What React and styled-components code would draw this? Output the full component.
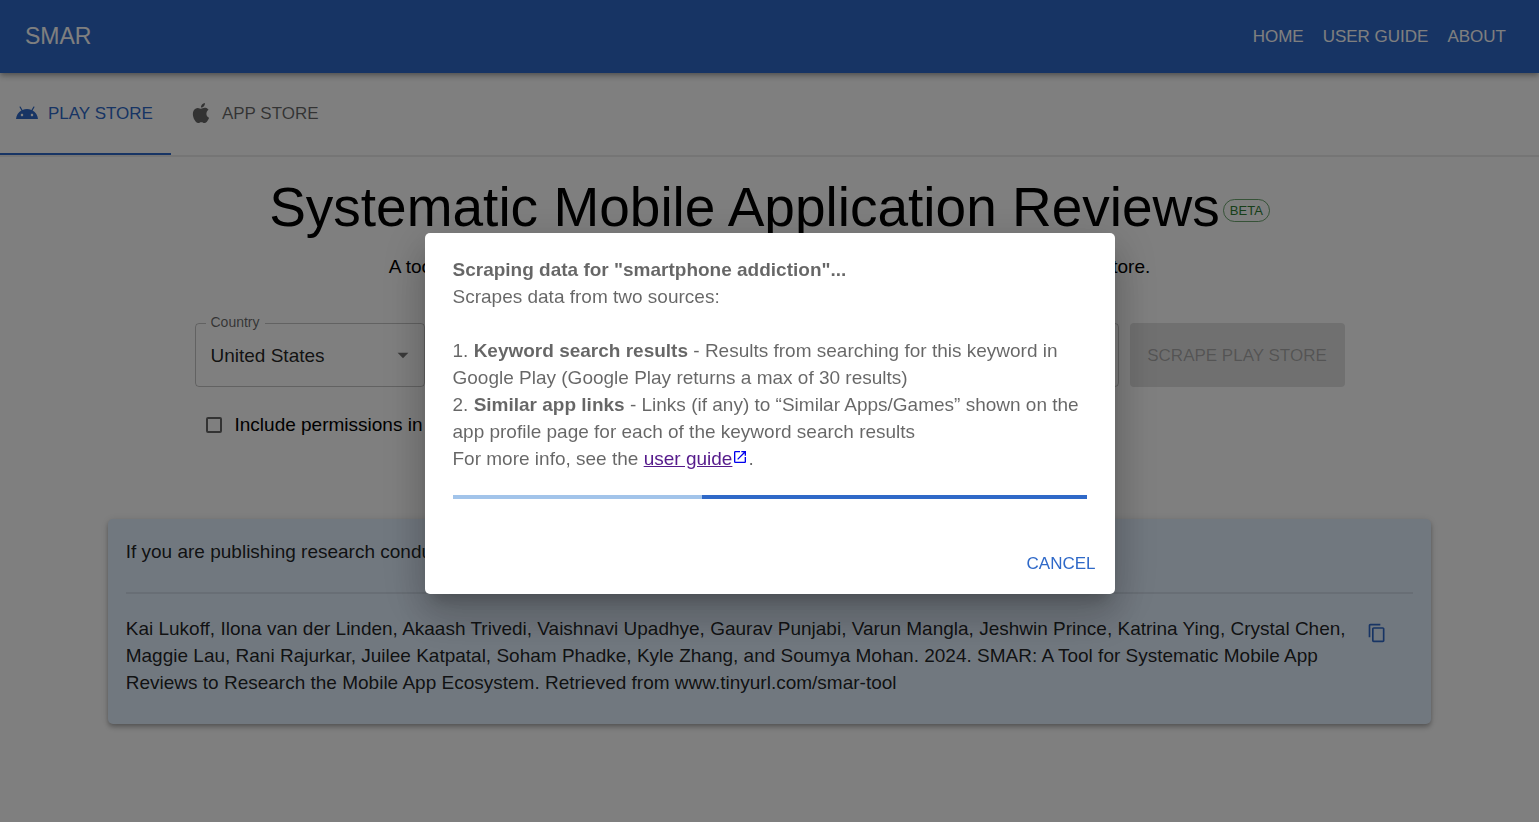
import React from "react";
import styled, { createGlobalStyle } from "styled-components";
import { MdContentCopy, MdOpenInNew, MdArrowDropDown } from "react-icons/md";

const primary = "#2f69c8";

const GlobalStyle = createGlobalStyle`
  *, *::before, *::after { box-sizing: border-box; }
  body {
    margin: 0;
    background: #fff;
    color: #000;
    font-family: "Liberation Sans", Helvetica, Arial, sans-serif;
    font-size: 19px;
    line-height: 27px;
  }
  button, input, select { font: inherit; }
`;

const AppBar = styled.header`
  position: relative;
  display: flex;
  align-items: center;
  justify-content: space-between;
  min-height: 73px;
  padding: 0 33px 0 25px;
  background: ${primary};
  color: #fff;
  box-shadow: 0 2px 4px -1px rgba(0, 0, 0, 0.2), 0 4px 5px rgba(0, 0, 0, 0.14),
    0 1px 10px rgba(0, 0, 0, 0.12);
`;

const Brand = styled.a`
  color: inherit;
  font-size: 23px;
  text-decoration: none;
`;

const Nav = styled.nav`
  display: flex;
  gap: 19px;
`;

const NavLink = styled.a`
  color: inherit;
  font-size: 17px;
  text-decoration: none;
  text-transform: uppercase;
`;

const TabBar = styled.div`
  display: flex;
  min-height: 84px;
  border-bottom: 2px solid rgba(0, 0, 0, 0.08);
`;

const Tab = styled.button`
  display: flex;
  align-items: center;
  gap: 9px;
  padding: 0 18px 0 ${(p) => (p.$active ? "15px" : "18px")};
  border: 0;
  border-bottom: 2px solid ${(p) => (p.$active ? primary : "transparent")};
  background: none;
  color: ${(p) => (p.$active ? primary : "rgba(0, 0, 0, 0.6)")};
  font-size: 17px;
  text-transform: uppercase;
`;

const TabIcon = styled.svg`
  width: 24px;
  height: 24px;
  fill: currentColor;
`;

const Main = styled.main`
  padding: 18px 7% 72px;
`;

const TitleRow = styled.div`
  display: flex;
  align-items: center;
  justify-content: center;
  gap: 3px;
`;

const Title = styled.h1`
  margin: 0;
  font-size: 55px;
  font-weight: 400;
  line-height: 64px;
`;

const Chip = styled.span`
  margin-top: 6px;
  padding: 0 6px;
  border: 1px solid rgba(46, 125, 50, 0.7);
  border-radius: 12px;
  color: #2e7d32;
  font-size: 13px;
  line-height: 21px;
`;

const Subtitle = styled.p`
  margin: 14px 0 43px;
  text-align: center;
`;

const Form = styled.form`
  max-width: 1150px;
  margin: 0 auto;
`;

const FieldRow = styled.div`
  display: flex;
  gap: 11px;
`;

const Field = styled.div`
  position: relative;
  display: flex;
  flex: ${(p) => (p.$grow ? "1 1 0" : "0 0 230px")};
  align-items: center;
  height: 64px;
  border: 1px solid rgba(0, 0, 0, 0.23);
  border-radius: 4px;
`;

const FieldLabel = styled.label`
  position: absolute;
  top: -11px;
  left: 10px;
  padding: 0 5px;
  background: #fff;
  color: rgba(0, 0, 0, 0.6);
  font-size: 14px;
  line-height: 18px;
`;

const Select = styled.select`
  width: 100%;
  height: 100%;
  padding: 0 36px 0 15px;
  border: 0;
  appearance: none;
  background: none;
  color: rgba(0, 0, 0, 0.87);
`;

const SelectArrow = styled(MdArrowDropDown)`
  position: absolute;
  right: 8px;
  color: rgba(0, 0, 0, 0.54);
  font-size: 26px;
  pointer-events: none;
`;

const TextInput = styled.input`
  width: 100%;
  height: 100%;
  padding: 0 15px;
  border: 0;
  background: none;
`;

const SubmitButton = styled.button`
  flex: 0 0 215px;
  border: 0;
  border-radius: 4px;
  background: rgba(0, 0, 0, 0.12);
  color: rgba(0, 0, 0, 0.26);
  font-size: 17px;
  text-transform: uppercase;
`;

const CheckRow = styled.label`
  display: flex;
  align-items: center;
  gap: 13px;
  margin: 24px 0 0 11px;
`;

const Checkbox = styled.input`
  width: 16px;
  height: 16px;
  margin: 0;
  appearance: none;
  border: 2px solid rgba(0, 0, 0, 0.6);
  border-radius: 2px;
`;

const Card = styled.section`
  margin-top: 81px;
  padding: 19px 18px 28px;
  border-radius: 5px;
  background: #e3f0ff;
  color: rgba(0, 0, 0, 0.87);
  box-shadow: 0 2px 4px -1px rgba(0, 0, 0, 0.2), 0 4px 5px rgba(0, 0, 0, 0.14),
    0 1px 10px rgba(0, 0, 0, 0.12);
`;

const CardIntro = styled.p`
  margin: 0;
`;

const Divider = styled.hr`
  height: 2px;
  margin: 27px 0 21px;
  border: 0;
  background: rgba(0, 0, 0, 0.08);
`;

const CitationRow = styled.div`
  display: flex;
  align-items: flex-start;
  gap: 8px;
  padding-right: 18px;
`;

const Citation = styled.p`
  flex: 1;
  margin: 0;
`;

const CopyButton = styled.button`
  display: flex;
  align-items: center;
  justify-content: center;
  width: 36px;
  height: 36px;
  padding: 0;
  border: 0;
  background: none;
  color: ${primary};
  font-size: 20px;
`;

const Backdrop = styled.div`
  position: fixed;
  inset: 0;
  display: flex;
  align-items: center;
  justify-content: center;
  padding: 37px 36px 32px;
  background: rgba(0, 0, 0, 0.5);
`;

const Dialog = styled.div`
  width: 100%;
  max-width: 690px;
  border-radius: 5px;
  background: #fff;
  box-shadow: 0 11px 15px -7px rgba(0, 0, 0, 0.2),
    0 24px 38px 3px rgba(0, 0, 0, 0.14), 0 9px 46px 8px rgba(0, 0, 0, 0.12);
`;

const DialogBody = styled.div`
  padding: 23px 28px;
  color: rgba(0, 0, 0, 0.6);
`;

const DialogTitle = styled.h2`
  margin: 0;
  font-size: 19px;
  font-weight: 700;
  line-height: 27px;
`;

const Paragraph = styled.p`
  margin: 0 0 ${(p) => (p.$spaced ? "27px" : "0")};
`;

const GuideLink = styled.a`
  color: #551a8b;
`;

const ExternalIcon = styled(MdOpenInNew)`
  color: #0000ee;
  font-size: 16px;
  vertical-align: 0;
`;

const Progress = styled.div`
  height: 4px;
  margin-top: 23px;
  background: #a2c4ea;
`;

const ProgressBar = styled.div`
  height: 100%;
  margin-left: auto;
  background: ${primary};
`;

const DialogActions = styled.div`
  display: flex;
  justify-content: flex-end;
  padding: 22px 9px 11px;
`;

const TextButton = styled.button`
  padding: 6px 10px;
  border: 0;
  background: none;
  color: ${primary};
  font-size: 17px;
  text-transform: uppercase;
`;

function AndroidIcon() {
  return (
    <TabIcon viewBox="0 0 24 24" aria-hidden="true">
      <path d="M17.6 9.48l1.84-3.18c.16-.31.04-.69-.26-.85-.29-.15-.65-.06-.83.22l-1.88 3.24c-2.86-1.21-6.08-1.21-8.94 0L5.65 5.67c-.19-.29-.58-.38-.87-.2-.28.18-.37.54-.22.83L6.4 9.48C3.3 11.25 1.28 14.44 1 18h22c-.28-3.56-2.3-6.75-5.4-8.52zM7 15.25c-.69 0-1.25-.56-1.25-1.25s.56-1.25 1.25-1.25 1.25.56 1.25 1.25-.56 1.25-1.25 1.25zm10 0c-.69 0-1.25-.56-1.25-1.25s.56-1.25 1.25-1.25 1.25.56 1.25 1.25-.56 1.25-1.25 1.25z" />
    </TabIcon>
  );
}

function AppleIcon() {
  return (
    <TabIcon viewBox="0 0 24 24" aria-hidden="true">
      <path d="M18.71 19.5c-.83 1.24-1.71 2.45-3.05 2.47-1.34.03-1.77-.79-3.29-.79-1.53 0-2 .77-3.27.82-1.31.05-2.3-1.32-3.14-2.53C4.25 17 2.94 12.45 4.7 9.39c.87-1.52 2.43-2.48 4.12-2.51 1.28-.02 2.5.87 3.29.87.78 0 2.26-1.07 3.81-.91.65.03 2.47.26 3.64 1.98-.09.06-2.17 1.28-2.15 3.81.03 3.02 2.65 4.03 2.68 4.04-.03.07-.42 1.44-1.38 2.83M13 3.5c.73-.83 1.94-1.46 2.94-1.5.13 1.17-.34 2.35-1.04 3.19-.69.85-1.83 1.51-2.95 1.42-.15-1.15.41-2.35 1.05-3.11z" />
    </TabIcon>
  );
}

export default function App() {
  return (
    <>
      <GlobalStyle />
      <AppBar>
        <Brand href="#home">SMAR</Brand>
        <Nav>
          <NavLink href="#home">Home</NavLink>
          <NavLink href="#guide">User Guide</NavLink>
          <NavLink href="#about">About</NavLink>
        </Nav>
      </AppBar>

      <TabBar role="tablist">
        <Tab role="tab" aria-selected="true" $active>
          <AndroidIcon />
          Play Store
        </Tab>
        <Tab role="tab" aria-selected="false">
          <AppleIcon />
          App Store
        </Tab>
      </TabBar>

      <Main>
        <TitleRow>
          <Title>Systematic Mobile Application Reviews</Title>
          <Chip>BETA</Chip>
        </TitleRow>
        <Subtitle>
          A tool for researchers to find and review apps on the Google Play Store and the App Store.
        </Subtitle>

        <Form>
          <FieldRow>
            <Field>
              <FieldLabel htmlFor="country">Country</FieldLabel>
              <Select id="country" defaultValue="us">
                <option value="us">United States</option>
              </Select>
              <SelectArrow aria-hidden="true" />
            </Field>
            <Field $grow>
              <FieldLabel htmlFor="keyword">Keyword</FieldLabel>
              <TextInput id="keyword" defaultValue="smartphone addiction" />
            </Field>
            <SubmitButton type="button" disabled>
              Scrape Play Store
            </SubmitButton>
          </FieldRow>
          <CheckRow>
            <Checkbox type="checkbox" />
            Include permissions in results
          </CheckRow>
        </Form>

        <Card>
          <CardIntro>
            If you are publishing research conducted with this tool, please cite it as:
          </CardIntro>
          <Divider />
          <CitationRow>
            <Citation>
              Kai Lukoff, Ilona van der Linden, Akaash Trivedi, Vaishnavi Upadhye, Gaurav Punjabi,
              Varun Mangla, Jeshwin Prince, Katrina Ying, Crystal Chen, Maggie Lau, Rani Rajurkar,
              Juilee Katpatal, Soham Phadke, Kyle Zhang, and Soumya Mohan. 2024. SMAR: A Tool for
              Systematic Mobile App Reviews to Research the Mobile App Ecosystem. Retrieved from
              www.tinyurl.com/smar-tool
            </Citation>
            <CopyButton type="button" aria-label="Copy citation">
              <MdContentCopy />
            </CopyButton>
          </CitationRow>
        </Card>
      </Main>

      <Backdrop>
        <Dialog role="dialog" aria-modal="true" aria-labelledby="dialog-title">
          <DialogBody>
            <DialogTitle id="dialog-title">
              Scraping data for "smartphone addiction"...
            </DialogTitle>
            <Paragraph $spaced>Scrapes data from two sources:</Paragraph>
            <Paragraph>
              1. <b>Keyword search results</b> - Results from searching for this keyword in Google
              Play (Google Play returns a max of 30 results)
            </Paragraph>
            <Paragraph>
              2. <b>Similar app links</b> - Links (if any) to “Similar Apps/Games” shown on the app
              profile page for each of the keyword search results
            </Paragraph>
            <Paragraph>
              For more info, see the <GuideLink href="#guide">user guide</GuideLink>
              <ExternalIcon aria-hidden="true" />.
            </Paragraph>
            <Progress role="progressbar" aria-label="Scraping">
              <ProgressBar style={{ width: "60.7%" }} />
            </Progress>
          </DialogBody>
          <DialogActions>
            <TextButton type="button">Cancel</TextButton>
          </DialogActions>
        </Dialog>
      </Backdrop>
    </>
  );
}
